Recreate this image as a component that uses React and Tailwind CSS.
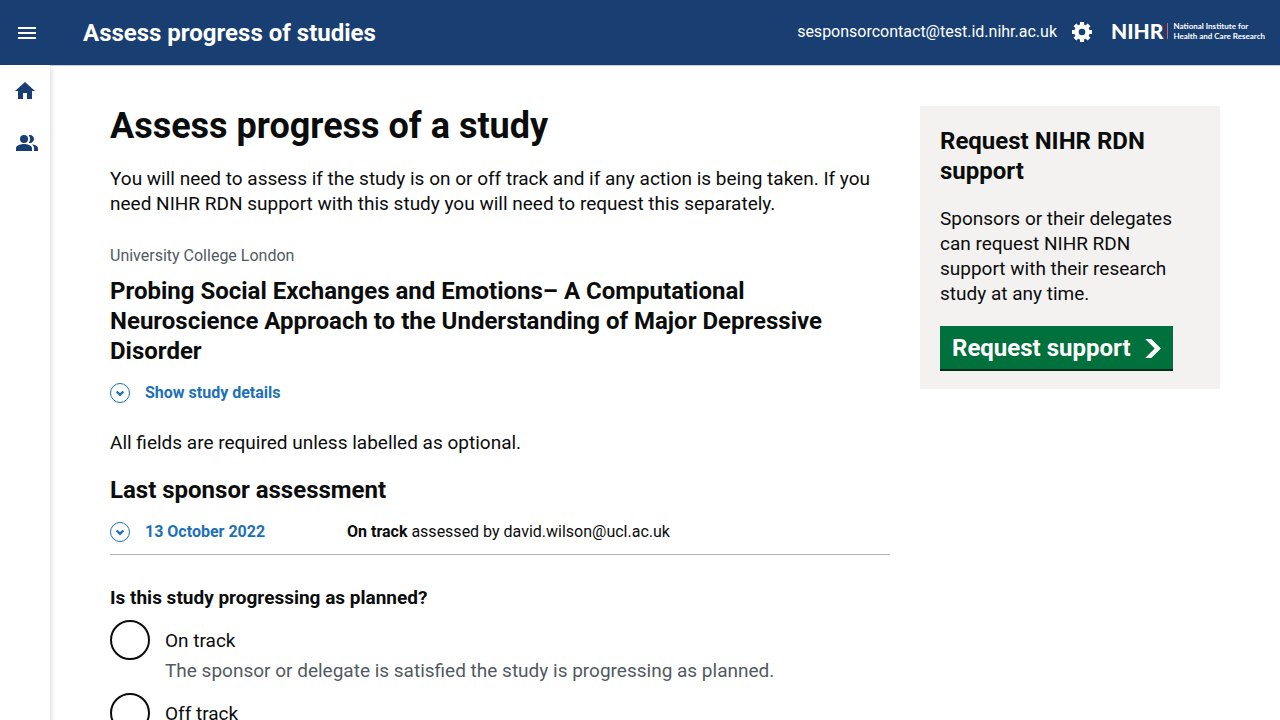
import { MdMenu, MdHome, MdPeopleAlt } from "react-icons/md";

function GearIcon() {
  return (
    <svg viewBox="0 0 20 20" className="size-5" fill="currentColor" fillRule="evenodd" aria-hidden="true">
      <path d="M8 0h4v2.500l1.900.8 1.800-1.800 2.800 2.800-1.800 1.800.8 1.900H20v4h-2.500l-.8 1.900 1.800 1.800-2.800 2.800-1.800-1.800-1.900.8V20H8v-2.500l-1.900-.8-1.800 1.800-2.800-2.800 1.800-1.800-.8-1.900H0V8h2.500l.8-1.900-1.800-1.800 2.800-2.800 1.800 1.800 1.900-.8zM10 6.700a3.300 3.300 0 1 0 0 6.600 3.300 3.300 0 0 0 0-6.600z" />
    </svg>
  );
}

function NihrLogo() {
  return (
    <a href="#home" aria-label="NIHR home" className="flex items-center gap-1 pb-1 font-[Lato,sans-serif]">
      <span className="text-[21px] leading-5 font-black">NIHR</span>
      <span className="h-4 w-px shrink-0 bg-[#ea5d4e]" />
      <span className="pl-px text-[8px] leading-[10px] font-bold whitespace-nowrap">
        National Institute for
        <br />
        Health and Care Research
      </span>
    </a>
  );
}

function Toggle({ children }) {
  return (
    <button type="button" className="flex items-center gap-[15px] leading-5 font-bold text-[#1d70b8]">
      <svg viewBox="0 0 20 20" className="size-5" fill="none" stroke="currentColor" aria-hidden="true">
        <circle cx="10" cy="10" r="9.500" />
        <path d="M6.700 8.500 10 11.800l3.300-3.300" strokeWidth="2.400" />
      </svg>
      {children}
    </button>
  );
}

function Radio({ id, label, hint }) {
  return (
    <div className="flex gap-[15px]">
      <input
        type="radio"
        name="status"
        id={id}
        aria-describedby={hint ? `${id}-hint` : undefined}
        className="size-10 shrink-0 appearance-none rounded-full border-2 border-[#0b0c0c] bg-white checked:bg-[#0b0c0c] checked:shadow-[inset_0_0_0_8px_white]"
      />
      <div className="pt-2">
        <label htmlFor={id} className="block">{label}</label>
        {hint && (
          <p id={`${id}-hint`} className="pt-[5px] text-[#505a5f]">{hint}</p>
        )}
      </div>
    </div>
  );
}

export default function App() {
  return (
    <div className="flex min-h-screen flex-col bg-white font-[Roboto,Arial,sans-serif] text-base text-[#0b0c0c]">
      <header className="flex h-[65px] shrink-0 items-center bg-[#193e72] px-[15px] text-white">
        <button type="button" aria-label="Open menu">
          <MdMenu className="size-6" />
        </button>
        <span className="pl-11 text-2xl leading-[30px] font-bold">Assess progress of studies</span>
        <div className="ml-auto flex items-center gap-[15px]">
          <span className="pb-0.5">sesponsorcontact@test.id.nihr.ac.uk</span>
          <button type="button" aria-label="Settings" className="pb-0.5">
            <GearIcon />
          </button>
          <div className="pl-1">
            <NihrLogo />
          </div>
        </div>
      </header>

      <div className="flex flex-1">
        <nav aria-label="Main" className="flex w-[50px] shrink-0 flex-col items-center gap-7 pt-[14px] text-[#193e72] shadow-[2px_3px_5px_rgba(0,0,0,0.12)]">
          <a href="#home" aria-label="Home">
            <MdHome className="size-6" />
          </a>
          <a href="#studies" aria-label="Studies" className="pl-1">
            <MdPeopleAlt className="size-6" />
          </a>
        </nav>

        <div className="flex min-w-0 flex-1 items-start gap-[30px] border-t border-[#c5d0dd] px-[60px] pt-10">
          <main className="min-w-0 flex-1 text-[19px] leading-[25px]">
            <h1 className="text-4xl leading-10 font-bold">Assess progress of a study</h1>
            <p className="mt-5">
              You will need to assess if the study is on or off track and if any action is being taken. If you need NIHR
              RDN support with this study you will need to request this separately.
            </p>
            <p className="mt-[30px] text-base leading-5 text-[#505a5f]">University College London</p>
            <h2 className="mt-[10px] text-2xl leading-[30px] font-bold">
              Probing Social Exchanges and Emotions– A Computational Neuroscience Approach to the Understanding of Major
              Depressive Disorder
            </h2>
            <div className="mt-[17px] text-base">
              <Toggle>Show study details</Toggle>
            </div>
            <p className="mt-[27px]">All fields are required unless labelled as optional.</p>
            <h3 className="mt-5 text-2xl leading-[30px] font-bold">Last sponsor assessment</h3>
            <div className="mt-[17px] flex items-center border-b border-[#b1b4b6] pb-3 text-base leading-5">
              <div className="w-[237px]">
                <Toggle>13 October 2022</Toggle>
              </div>
              <p>
                <strong>On track</strong> assessed by david.wilson@ucl.ac.uk
              </p>
            </div>
            <fieldset className="mt-[30px]">
              <legend className="font-bold">Is this study progressing as planned?</legend>
              <div className="mt-[10px] flex flex-col gap-[10px]">
                <Radio
                  id="on-track"
                  label="On track"
                  hint="The sponsor or delegate is satisfied the study is progressing as planned."
                />
                <Radio id="off-track" label="Off track" />
              </div>
            </fieldset>
          </main>

          <aside className="w-[300px] shrink-0 bg-[#f3f2f1] p-5 pb-[18px]">
            <h2 className="text-2xl leading-[30px] font-bold">Request NIHR RDN support</h2>
            <p className="mt-5 text-[19px] leading-[25px]">
              Sponsors or their delegates can request NIHR RDN support with their research study at any time.
            </p>
            <a
              href="#support"
              className="mt-5 inline-flex items-center gap-[14px] border-b-2 border-[#002d18] bg-[#00703c] px-3 pt-[7px] pb-[6px] text-2xl leading-[30px] font-bold text-white"
            >
              Request support
              <svg viewBox="0 0 33 40" className="h-[19px] w-4" fill="currentColor" aria-hidden="true">
                <path d="M0 0h13l20 20-20 20H0l20-20z" />
              </svg>
            </a>
          </aside>
        </div>
      </div>
    </div>
  );
}
